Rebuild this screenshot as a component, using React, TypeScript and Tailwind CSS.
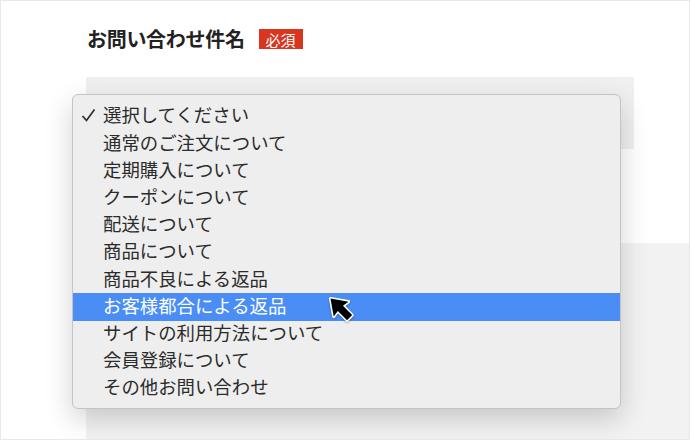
const items = [
  "選択してください",
  "通常のご注文について",
  "定期購入について",
  "クーポンについて",
  "配送について",
  "商品について",
  "商品不良による返品",
  "お客様都合による返品",
  "サイトの利用方法について",
  "会員登録について",
  "その他お問い合わせ",
]

function Cursor() {
  const pts = "0,0 10.5,15 3.6,14 3.6,27 -3.6,27 -3.6,14 -10.5,15"
  return (
    <svg
      width="40"
      height="40"
      viewBox="0 0 40 40"
      className="absolute left-[322px] top-[290px] drop-shadow-[0_1px_1px_rgba(0,0,0,0.3)]"
    >
      <g transform="translate(7.5 7.5) rotate(-45)">
        <polygon points={pts} fill="#fff" stroke="#fff" strokeWidth="3.2" strokeLinejoin="round" />
        <polygon points={pts} fill="#000" />
      </g>
    </svg>
  )
}

export default function App() {
  return (
    <div className="relative w-[690px] h-[440px] overflow-hidden border border-[#e8e8e8] bg-white font-['Noto_Sans_CJK_JP',sans-serif] flex flex-col">
      <div className="flex items-center h-[24px] mt-[26px] pl-[86px]">
        <h1 className="text-[20px] font-bold text-[#222] leading-none tracking-[-0.3px] -mt-[1px]">お問い合わせ件名</h1>
        <span className="ml-[14px] h-[20px] px-[7px] flex items-center bg-[#d8361f] text-white text-[15px] leading-none">
          必須
        </span>
      </div>

      <div className="ml-[85px] mt-[26px] w-[548px] h-[72px] bg-[#f0f0f0]" />

      <div className="ml-[85px] mt-[94px] flex-1 bg-[#f2f2f2]" />

      <div className="absolute left-[71px] top-[93px] w-[549px] rounded-[6px] border border-[#c4c4c4] bg-[#eeeeee] pt-[8px] pb-[6px] shadow-[0_10px_28px_rgba(0,0,0,0.18)]">
        {items.map((label, i) => {
          const active = i === 7
          return (
            <div
              key={label}
              className={
                "relative flex items-center h-[27.2px] pl-[30px] text-[18.4px] leading-none " +
                (active ? "bg-[#4a8ef5] text-white" : "text-[#2b2b2b]")
              }
            >
              {i === 0 && (
                <svg width="15" height="15" viewBox="0 0 15 15" className="absolute left-[8px] top-[5px]">
                  <path d="M1.5 8 L5.5 12.5 L13.5 1.5" fill="none" stroke="#2b2b2b" strokeWidth="1.7" />
                </svg>
              )}
              <span className="-mt-[4px]">{label}</span>
            </div>
          )
        })}
      </div>

      <Cursor />
    </div>
  )
}
